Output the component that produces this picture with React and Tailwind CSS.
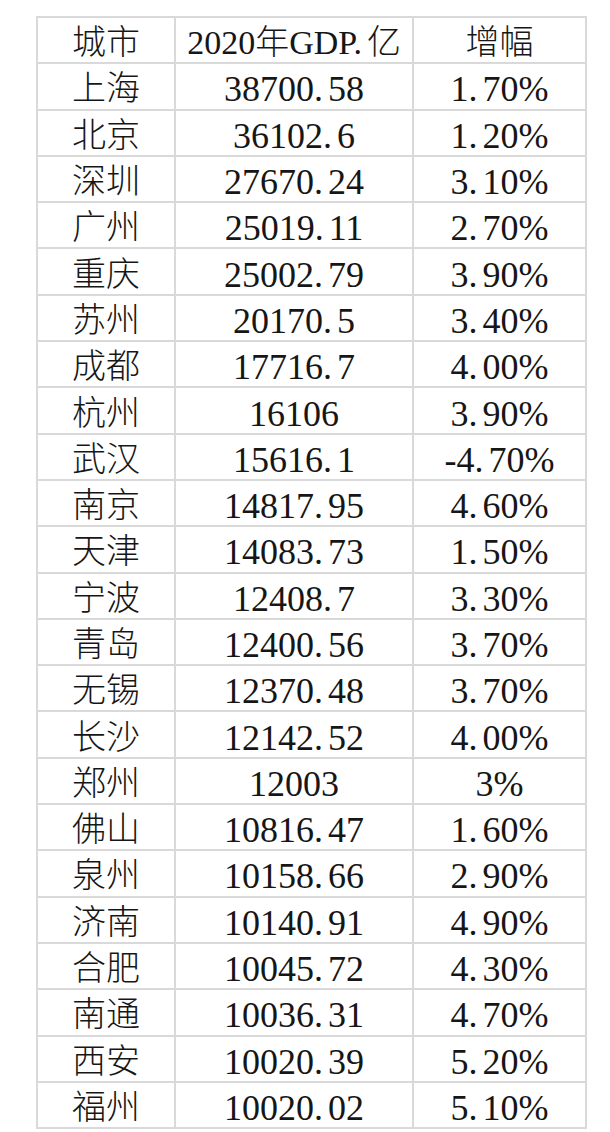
const rows = [
  ['上海', '38700.58', '1.70%'],
  ['北京', '36102.6', '1.20%'],
  ['深圳', '27670.24', '3.10%'],
  ['广州', '25019.11', '2.70%'],
  ['重庆', '25002.79', '3.90%'],
  ['苏州', '20170.5', '3.40%'],
  ['成都', '17716.7', '4.00%'],
  ['杭州', '16106', '3.90%'],
  ['武汉', '15616.1', '-4.70%'],
  ['南京', '14817.95', '4.60%'],
  ['天津', '14083.73', '1.50%'],
  ['宁波', '12408.7', '3.30%'],
  ['青岛', '12400.56', '3.70%'],
  ['无锡', '12370.48', '3.70%'],
  ['长沙', '12142.52', '4.00%'],
  ['郑州', '12003', '3%'],
  ['佛山', '10816.47', '1.60%'],
  ['泉州', '10158.66', '2.90%'],
  ['济南', '10140.91', '4.90%'],
  ['合肥', '10045.72', '4.30%'],
  ['南通', '10036.31', '4.70%'],
  ['西安', '10020.39', '5.20%'],
  ['福州', '10020.02', '5.10%'],
];

// the period in the sheet font is wide, so pad it a little
function Num({ text }) {
  const i = text.indexOf('.');
  if (i < 0) return <>{text}</>;
  return (
    <>
      {text.slice(0, i)}
      <span className="mr-[5px]">.</span>
      {text.slice(i + 1)}
    </>
  );
}

const cell = 'border-2 border-[#d9d9d9] text-center align-middle p-0 pt-[6px] leading-none';

export default function App() {
  return (
    <div className="min-h-[1132px] bg-white pt-[16px] pl-[36px] font-['Liberation_Serif','Noto_Sans_CJK_SC',serif] text-[#161616]">
      <table className="border-collapse table-fixed w-[549px]">
        <colgroup>
          <col className="w-[138px]" />
          <col className="w-[238px]" />
          <col className="w-[173px]" />
        </colgroup>
        <tbody>
          <tr className="h-[46.3px]">
            <td className={`${cell} text-[34px] font-light`}>城市</td>
            <td className={`${cell} text-[34px]`}>
              2020<span className="font-light">年</span>GDP<span className="mr-[5px]">.</span>
              <span className="font-light">亿</span>
            </td>
            <td className={`${cell} text-[34px] font-light`}>增幅</td>
          </tr>
          {rows.map(([city, gdp, rate]) => (
            <tr key={city} className="h-[46.3px]">
              <td className={`${cell} text-[34px] font-light`}>{city}</td>
              <td className={`${cell} text-[36px]`}>
                <Num text={gdp} />
              </td>
              <td className={`${cell} text-[36px]`}>
                <Num text={rate} />
              </td>
            </tr>
          ))}
        </tbody>
      </table>
    </div>
  );
}
